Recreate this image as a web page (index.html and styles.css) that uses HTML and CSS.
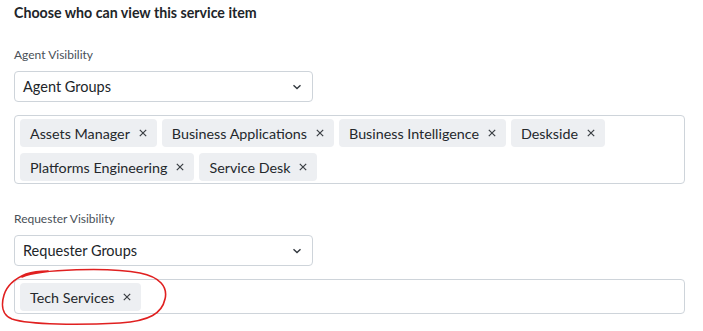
FILE: index.html
```html
<!DOCTYPE html>
<html>
<head>
<meta charset="utf-8">
<link rel="stylesheet" href="styles.css">
</head>
<body>
<div class="page">
  <h2 class="title">Choose who can view this service item</h2>

  <section class="field first">
    <label class="label">Agent Visibility</label>
    <div class="select">
      <span>Agent Groups</span>
      <svg class="chev" width="10" height="6" viewBox="0 0 10 6"><path d="M1.5 1.2 L5 4.6 L8.5 1.2" fill="none" stroke="#343a40" stroke-width="1.4"/></svg>
    </div>
    <div class="tags">
      <span class="tag">Assets Manager<svg class="x" viewBox="0 0 8 8"><path d="M0.8 0.8 L7.2 7.2 M7.2 0.8 L0.8 7.2"/></svg></span>
      <span class="tag">Business Applications<svg class="x" viewBox="0 0 8 8"><path d="M0.8 0.8 L7.2 7.2 M7.2 0.8 L0.8 7.2"/></svg></span>
      <span class="tag">Business Intelligence<svg class="x" viewBox="0 0 8 8"><path d="M0.8 0.8 L7.2 7.2 M7.2 0.8 L0.8 7.2"/></svg></span>
      <span class="tag">Deskside<svg class="x" viewBox="0 0 8 8"><path d="M0.8 0.8 L7.2 7.2 M7.2 0.8 L0.8 7.2"/></svg></span>
      <span class="tag">Platforms Engineering<svg class="x" viewBox="0 0 8 8"><path d="M0.8 0.8 L7.2 7.2 M7.2 0.8 L0.8 7.2"/></svg></span>
      <span class="tag">Service Desk<svg class="x" viewBox="0 0 8 8"><path d="M0.8 0.8 L7.2 7.2 M7.2 0.8 L0.8 7.2"/></svg></span>
    </div>
  </section>

  <section class="field second">
    <label class="label">Requester Visibility</label>
    <div class="select">
      <span>Requester Groups</span>
      <svg class="chev" width="10" height="6" viewBox="0 0 10 6"><path d="M1.5 1.2 L5 4.6 L8.5 1.2" fill="none" stroke="#343a40" stroke-width="1.4"/></svg>
    </div>
    <div class="tags single">
      <span class="tag">Tech Services<svg class="x" viewBox="0 0 8 8"><path d="M0.8 0.8 L7.2 7.2 M7.2 0.8 L0.8 7.2"/></svg></span>
    </div>
  </section>

  <svg class="ring" width="180" height="70" viewBox="0 0 180 70">
    <path d="M22 12 C40 4, 110 2, 140 8 C160 12, 168 22, 165 34 C162 48, 150 56, 120 58 C80 60, 30 60, 12 54 C2 50, 1 40, 4 30 C7 20, 14 14, 26 9 C32 7, 40 6, 48 6" fill="none" stroke="#e02020" stroke-width="1.6" stroke-linecap="round"/>
  </svg>
</div>
</body>
</html>
```

FILE: styles.css
```css
html, body {
  margin: 0;
  padding: 0;
  background: #ffffff;
}
body {
  font-family: "Lato", "Noto Sans", "DejaVu Sans", sans-serif;
  color: #212529;
}
.page {
  position: relative;
  width: 703px;
  height: 331px;
  padding: 0 0 0 14px;
  box-sizing: border-box;
}
.title {
  margin: 0;
  padding-top: 3px;
  font-size: 14.2px;
  font-weight: 700;
  line-height: 19px;
  color: #212529;
}
.field {
  display: flex;
  flex-direction: column;
}
.field.first {
  margin-top: 25px;
}
.field.second {
  margin-top: 27px;
}
.label {
  font-size: 12px;
  line-height: 16px;
  color: #495057;
  margin-bottom: 8px;
}
.select {
  width: 299px;
  height: 31px;
  box-sizing: border-box;
  border: 1px solid #ced4da;
  border-radius: 4px;
  display: flex;
  align-items: center;
  justify-content: space-between;
  padding: 0 10px 0 8px;
  font-size: 14.5px;
  color: #212529;
}
.chev {
  display: block;
}
.tags {
  margin-top: 13px;
  width: 671px;
  box-sizing: border-box;
  border: 1px solid #ced4da;
  border-radius: 4px;
  padding: 3px 5px 2px;
  display: flex;
  flex-wrap: wrap;
  column-gap: 5px;
  row-gap: 6px;
}
.tags.single {
  height: 35px;
  padding-top: 3px;
}
.tag {
  height: 28px;
  box-sizing: border-box;
  background: #edeff2;
  border-radius: 4px;
  padding: 0 10px;
  display: flex;
  align-items: center;
  font-size: 14.3px;
  color: #24282c;
  white-space: pre;
}
.x {
  width: 8px;
  height: 8px;
  margin-left: 9px;
  fill: none;
  stroke: #3a3f44;
  stroke-width: 1.2;
}
.ring {
  position: absolute;
  left: 0;
  top: 265px;
}
```
